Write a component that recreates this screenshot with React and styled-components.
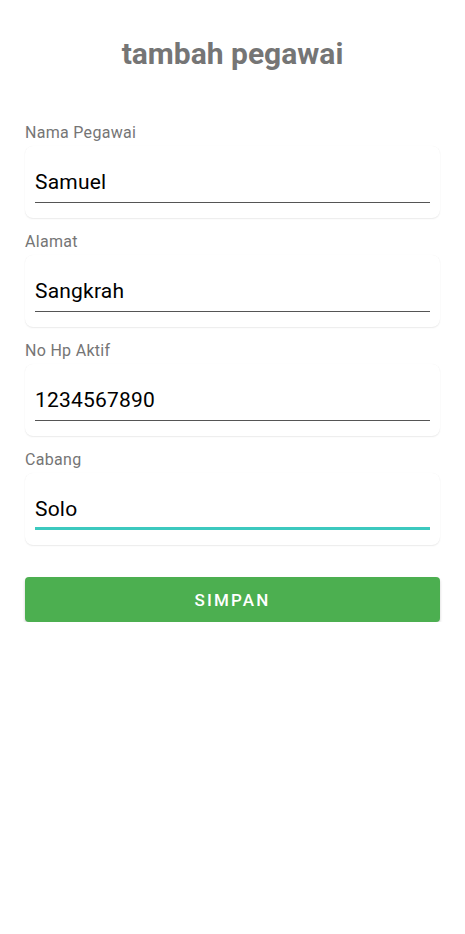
import React, { useState } from "react";
import styled, { createGlobalStyle } from "styled-components";

const GlobalStyle = createGlobalStyle`
  body {
    margin: 0;
    background: #ffffff;
    font-family: Roboto, "Noto Sans", sans-serif;
  }
`;

const Page = styled.div`
  padding: 37px 25px 0;
  display: flex;
  flex-direction: column;
`;

const Title = styled.h1`
  margin: 0 0 53px;
  text-align: center;
  font-size: 30px;
  line-height: 34px;
  font-weight: 700;
  color: #757575;
`;

const Field = styled.div`
  display: flex;
  flex-direction: column;
  margin-bottom: 15px;
`;

const Label = styled.label`
  font-size: 16px;
  line-height: 18px;
  letter-spacing: 0.3px;
  color: #757575;
  margin-bottom: 4px;
`;

const Card = styled.div`
  background: #ffffff;
  border-radius: 8px;
  box-shadow: 0 1px 1.5px rgba(0, 0, 0, 0.08), 0 0 1px rgba(0, 0, 0, 0.05);
  padding: 18px 10px 15px;
  height: 39px;
`;

const Input = styled.input`
  box-sizing: border-box;
  width: 100%;
  height: 39px;
  border: none;
  border-bottom: ${(p) => (p.$focused ? "3px solid #3cc9bf" : "1px solid #555555")};
  padding: 0 0 ${(p) => (p.$focused ? "0" : "2px")};
  font-family: Roboto, "Noto Sans", sans-serif;
  font-size: 21px;
  letter-spacing: 0.2px;
  color: #000000;
  background: transparent;
  outline: none;
`;

const Button = styled.button`
  margin-top: 17px;
  height: 45px;
  border: none;
  border-radius: 4px;
  background: #4caf50;
  color: #ffffff;
  font-family: Roboto, "Noto Sans", sans-serif;
  font-size: 17px;
  font-weight: 500;
  letter-spacing: 2.2px;
  box-shadow: 0 2px 3px rgba(0, 0, 0, 0.2);
`;

const fields = [
  { label: "Nama Pegawai", value: "Samuel" },
  { label: "Alamat", value: "Sangkrah" },
  { label: "No Hp Aktif", value: "1234567890" },
  { label: "Cabang", value: "Solo", focused: true },
];

export default function App() {
  const [values, setValues] = useState(fields.map((f) => f.value));

  return (
    <Page>
      <GlobalStyle />
      <Title>tambah pegawai</Title>
      {fields.map((f, i) => (
        <Field key={f.label}>
          <Label>{f.label}</Label>
          <Card>
            <Input
              $focused={f.focused}
              value={values[i]}
              onChange={(e) => {
                const next = [...values];
                next[i] = e.target.value;
                setValues(next);
              }}
            />
          </Card>
        </Field>
      ))}
      <Button>SIMPAN</Button>
    </Page>
  );
}
